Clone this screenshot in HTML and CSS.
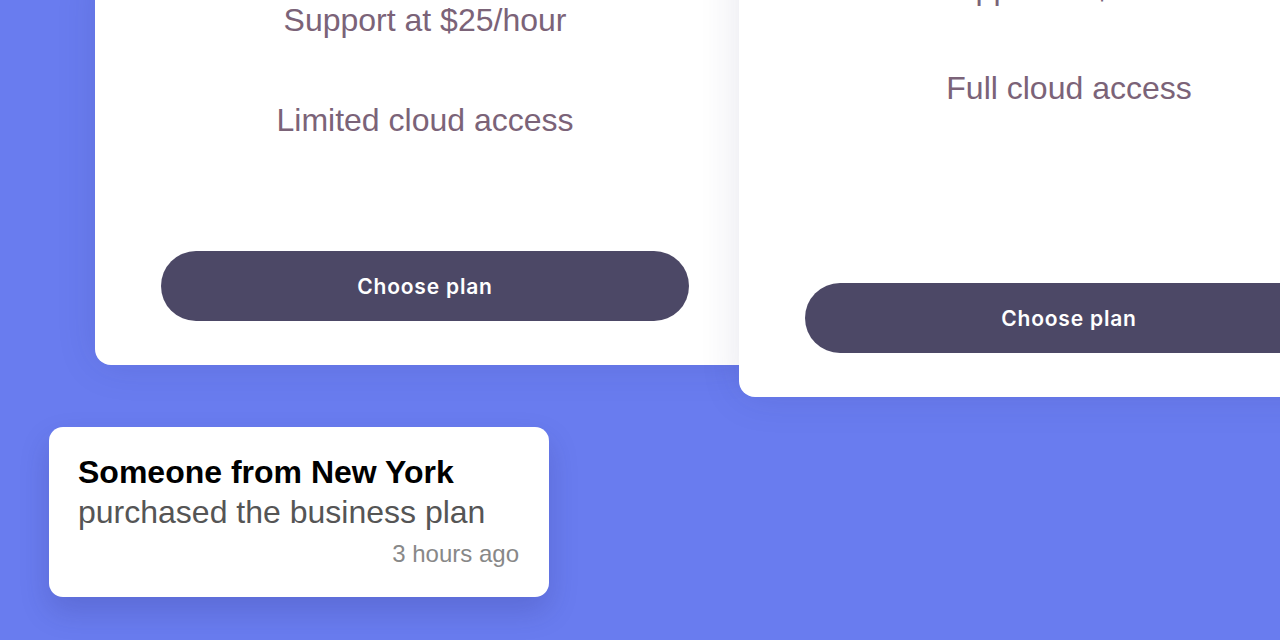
FILE: index.html
```html
<!DOCTYPE html>
<html lang="en">
<head>
<meta charset="utf-8">
<title>Pricing</title>
<link rel="stylesheet" href="styles.css">
</head>
<body>
<main class="plans">
  <section class="card">
    <ul class="features">
      <li>Support at $25/hour</li>
      <li>Limited cloud access</li>
    </ul>
    <button class="choose">Choose plan</button>
  </section>
  <section class="card featured">
    <ul class="features">
      <li>Support at $5/hour</li>
      <li>Full cloud access</li>
    </ul>
    <button class="choose">Choose plan</button>
  </section>
</main>
<aside class="toast">
  <p class="toast-title">Someone from New York</p>
  <p class="toast-text">purchased the business plan</p>
  <p class="toast-time">3 hours ago</p>
</aside>
</body>
</html>
```
FILE: styles.css
```css
html, body {
  margin: 0;
  padding: 0;
}
body {
  width: 1280px;
  height: 640px;
  overflow: hidden;
  background: #697cef;
  font-family: "Liberation Sans", Arial, sans-serif;
  position: relative;
}
.plans {
  display: flex;
  align-items: flex-start;
  margin-top: -30px;
  padding-left: 95px;
}
.card {
  flex: 0 0 660px;
  box-sizing: border-box;
  background: #fff;
  border-radius: 16px;
  padding: 0 66px 44px;
  display: flex;
  flex-direction: column;
  box-shadow: 0 0 40px rgba(40, 40, 110, 0.12);
}
.card.featured {
  margin-left: -16px;
  margin-top: -32px;
  position: relative;
}
.features {
  list-style: none;
  margin: 0;
  padding: 0;
}
.features li {
  font-size: 32px;
  line-height: 100px;
  text-align: center;
  color: #7b6378;
}
.choose {
  margin-top: 81px;
  height: 70px;
  box-sizing: border-box;
  border: none;
  border-radius: 35px;
  background: #4c4866;
  color: #fff;
  font-family: Inter, "Liberation Sans", sans-serif;
  font-weight: 600;
  font-size: 21px;
  letter-spacing: 0.8px;
  line-height: 64px;
  padding: 4px 0 2px;
}
.featured .choose {
  margin-top: 145px;
}
.toast {
  position: absolute;
  left: 49px;
  top: 427px;
  width: 500px;
  box-sizing: border-box;
  background: #fff;
  border-radius: 14px;
  padding: 25px 30px 28px 29px;
  box-shadow: 0 14px 30px rgba(40, 40, 110, 0.2);
}
.toast p {
  margin: 0;
}
.toast-title {
  font-size: 32px;
  line-height: 40px;
  font-weight: 700;
  color: #000;
}
.toast-text {
  font-size: 32px;
  line-height: 40px;
  color: #555;
}
.toast-time {
  margin-top: 7px !important;
  font-size: 24px;
  line-height: 30px;
  color: #888;
  text-align: right;
}
```
